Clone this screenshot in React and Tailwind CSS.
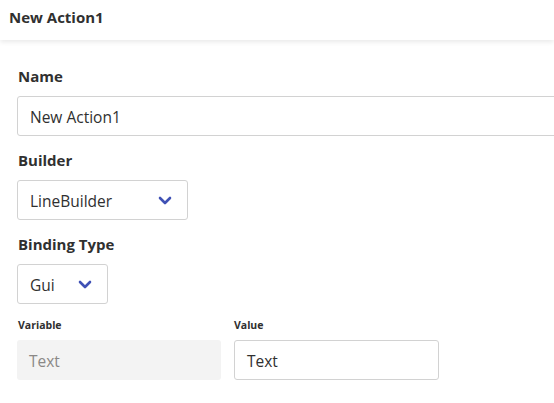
import React from "react";

function Chevron() {
  return (
    <svg width="14" height="9" viewBox="0 0 14 9" className="shrink-0">
      <path d="M2 2 L7 7 L12 2" fill="none" stroke="#3f51b5" strokeWidth="2.6" strokeLinecap="round" strokeLinejoin="round" />
    </svg>
  );
}

export default function App() {
  return (
    <div className="w-[554px] h-[403px] overflow-hidden bg-white text-[#303030]" style={{ fontFamily: '"Open Sans", "Noto Sans", sans-serif' }}>
      <div className="h-10 px-[9px] pt-[7px] shadow-[0_2px_5px_rgba(0,0,0,0.09)] relative">
        <div className="text-[15px] leading-5 font-bold">New Action1</div>
      </div>
      <div className="pl-[17px] pt-[26px]">
        <div className="text-[15px] leading-5 font-bold pl-px">Name</div>
        <div className="mt-[10px] h-10 w-[560px] border border-[#d2d2d2] rounded-[3px] flex items-center pl-3 pt-[3px] text-[15.5px]">
          New Action1
        </div>

        <div className="mt-[14px] text-[15px] leading-5 font-bold pl-px">Builder</div>
        <div className="mt-[10px] h-10 w-[171px] border border-[#d2d2d2] rounded-[3px] flex items-center justify-between pl-3 pr-[15px] text-[15.5px]">
          <span className="pt-[3px]">LineBuilder</span>
          <Chevron />
        </div>

        <div className="mt-[14px] text-[15px] leading-5 font-bold pl-px">Binding Type</div>
        <div className="mt-[10px] h-10 w-[91px] border border-[#d2d2d2] rounded-[3px] flex items-center justify-between pl-3 pr-[15px] text-[15.5px]">
          <span className="pt-[3px]">Gui</span>
          <Chevron />
        </div>

        <div className="mt-[13px] flex gap-[13px]">
          <div className="w-[204px]">
            <div className="text-[10.5px] leading-4 font-bold pl-px">Variable</div>
            <div className="mt-[7px] h-10 bg-[#f3f3f3] rounded-[3px] flex items-center pl-3 pt-[3px] text-[15.5px] text-[#8a8886]">
              Text
            </div>
          </div>
          <div className="w-[205px]">
            <div className="text-[10.5px] leading-4 font-bold">Value</div>
            <div className="mt-[7px] h-10 border border-[#d2d2d2] rounded-[3px] flex items-center pl-3 pt-[3px] text-[15.5px]">
              Text
            </div>
          </div>
        </div>
      </div>
    </div>
  );
}
